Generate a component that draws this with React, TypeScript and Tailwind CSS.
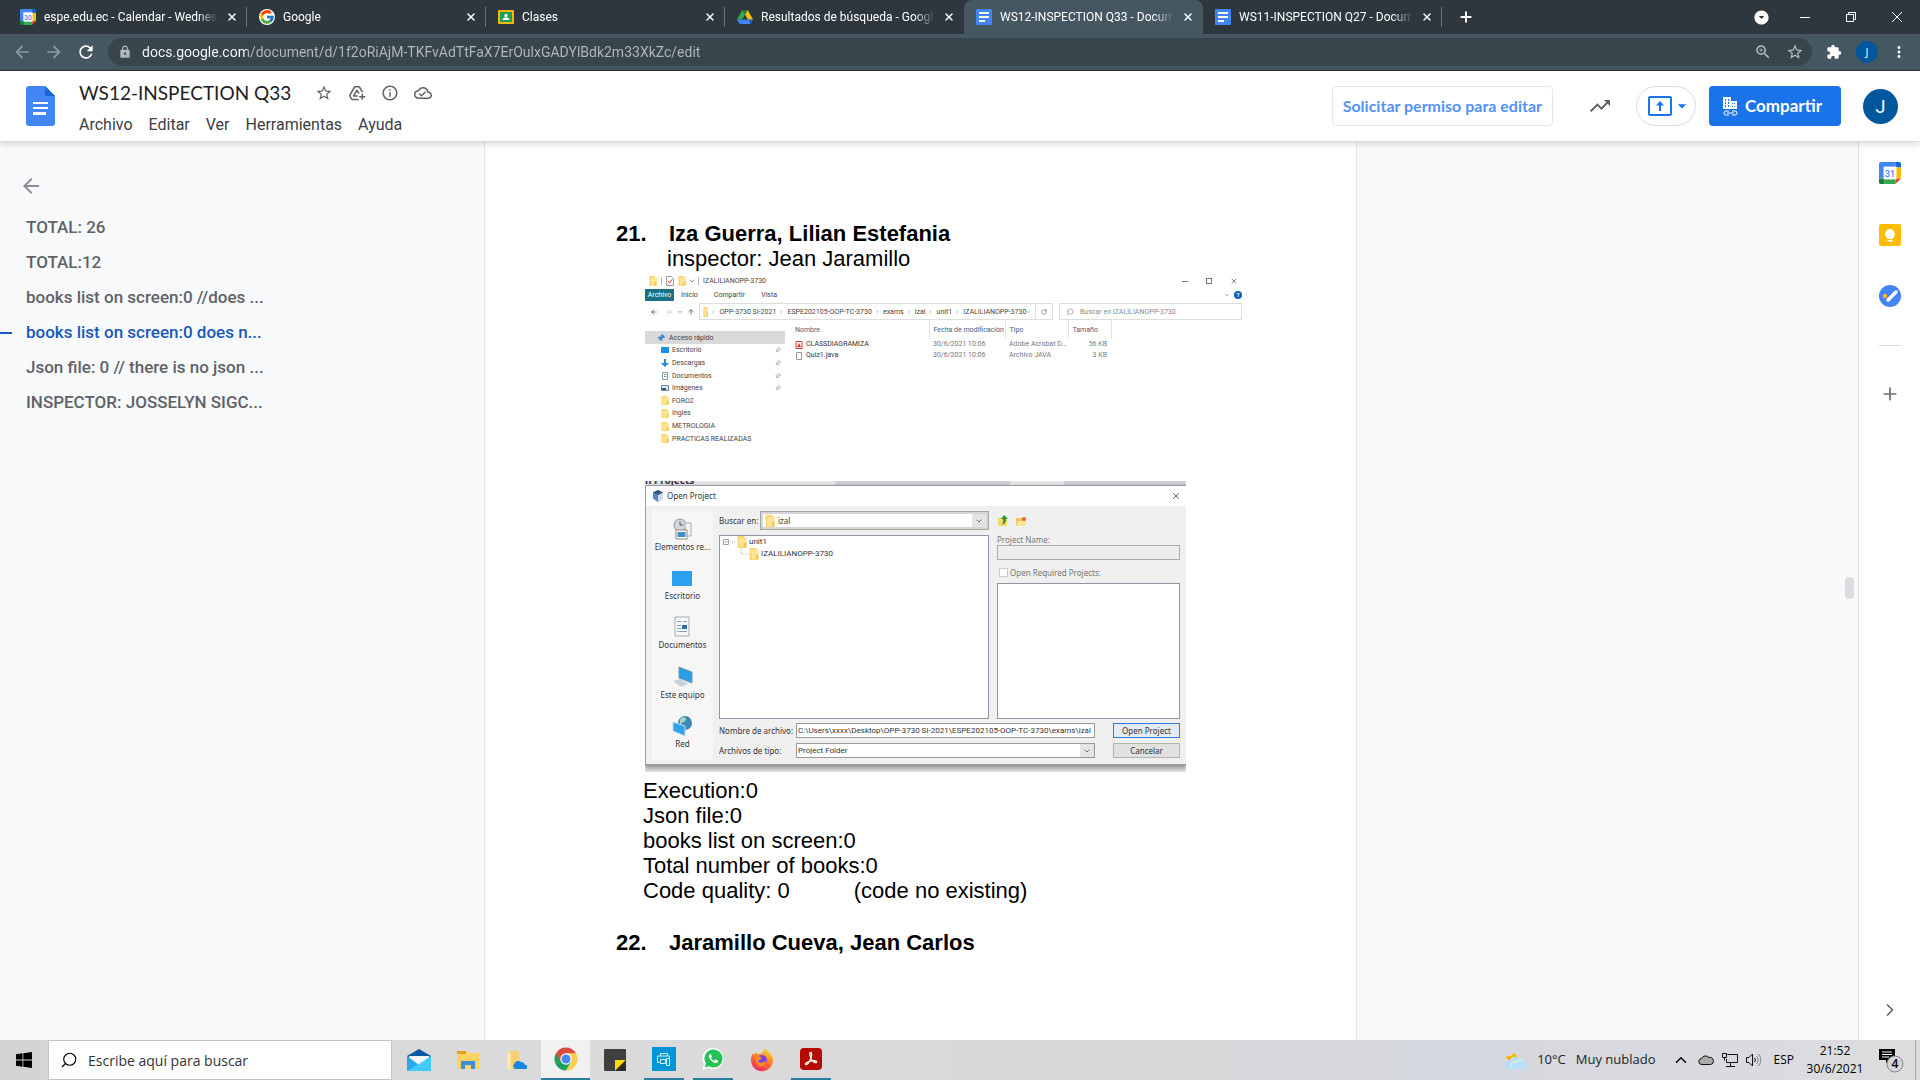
import React from "react";
import { FcGoogle } from "react-icons/fc";
import {
  MdAddToDrive,
  MdArrowBack,
  MdArrowDropDown,
  MdArrowDropDownCircle,
  MdArrowForward,
  MdExtension,
  MdInfoOutline,
  MdLock,
  MdMoreVert,
  MdOutlineCloudDone,
  MdRefresh,
  MdStarBorder,
  MdTrendingUp,
  MdZoomIn,
} from "react-icons/md";
import { ChevronDown, ChevronRight, ChevronUp, Plus, X, Pin, Search, ArrowUp, ArrowLeft, ArrowRight, RotateCw } from "lucide-react";

/* ---------- product icons ---------- */

function CalendarIcon({ day, className }: { day: string; className: string }) {
  return (
    <svg viewBox="0 0 24 24" className={className} aria-hidden="true">
      <path d="M2 0h16v6H6v12H0V2a2 2 0 0 1 2-2z" fill="#4285f4" />
      <path d="M18 0h4a2 2 0 0 1 2 2v4h-6z" fill="#1967d2" />
      <path d="M18 6h6v12h-6z" fill="#fbbc04" />
      <path d="M6 18h12v6H6z" fill="#34a853" />
      <path d="M0 18h6v6H2a2 2 0 0 1-2-2z" fill="#188038" />
      <path d="M18 18h6l-6 6z" fill="#ea4335" />
      <path d="M5 5h14v14H5z" fill="#fff" />
      <text x="12" y="16" textAnchor="middle" fontSize="10" fontFamily="Roboto, sans-serif" fontWeight="500" fill="#4285f4">
        {day}
      </text>
    </svg>
  );
}

function ClassroomIcon() {
  return (
    <svg viewBox="0 0 16 14" className="h-3.5 w-4" aria-hidden="true">
      <rect width="16" height="14" rx="1" fill="#f6b704" />
      <rect x="2" y="2" width="12" height="10" fill="#1e9c58" />
      <circle cx="8" cy="5.4" r="1.6" fill="#fff" />
      <path d="M4.5 10c0-2 2-2.4 3.500-2.400s3.500.4 3.500 2.400z" fill="#fff" />
    </svg>
  );
}

function DriveIcon() {
  return (
    <svg viewBox="0 0 87 78" className="h-3.5 w-4" aria-hidden="true">
      <path d="M6.600 66.850l3.850 6.650c.8 1.400 1.950 2.500 3.300 3.300L27.500 53H0c0 1.550.4 3.100 1.200 4.500z" fill="#4285f4" />
      <path d="M43.650 25L29.900 1.200c-1.350.8-2.500 1.900-3.300 3.300L1.200 48.500A9 9 0 0 0 0 53h27.500z" fill="#34a853" />
      <path d="M73.550 76.800c1.350-.8 2.500-1.900 3.300-3.300l9.250-16c.8-1.400.9-2.950.9-4.500H59.800z" fill="#1967d2" />
      <path d="M43.650 25L57.400 1.200C56.050.4 54.500 0 52.900 0H34.400c-1.600 0-3.150.45-4.500 1.200z" fill="#188038" />
      <path d="M59.800 53H27.500L13.750 76.800c1.350.8 2.900 1.200 4.500 1.200h50.800c1.600 0 3.150-.45 4.500-1.200z" fill="#4285f4" />
      <path d="M73.400 26.500L60.700 4.500c-.8-1.400-1.950-2.500-3.300-3.300L43.650 25 59.800 53h27.450c0-1.550-.4-3.100-1.200-4.500z" fill="#fbbc04" />
    </svg>
  );
}

function DocsFavicon() {
  return (
    <svg viewBox="0 0 16 16" className="size-4" aria-hidden="true">
      <rect width="16" height="16" rx="1" fill="#4285f4" />
      <path d="M3 3h10v2H3zM3 7h10v2H3zM3 11h6v2H3z" fill="#fff" />
    </svg>
  );
}

function DocsLogo() {
  return (
    <svg viewBox="0 0 29 40" className="h-10 w-[29px]" aria-hidden="true">
      <path d="M3 0h16l10 10v27a3 3 0 0 1-3 3H3a3 3 0 0 1-3-3V3a3 3 0 0 1 3-3z" fill="#4285f4" />
      <path d="M19 0l10 10H19z" fill="#1967d2" />
      <path d="M7 16h15v2H7zM7 21h15v2H7zM7 26h13v3H7z" fill="#fff" />
    </svg>
  );
}

function Folder({ className }: { className: string }) {
  return (
    <svg viewBox="0 0 16 16" preserveAspectRatio="none" className={className} aria-hidden="true">
      <path d="M1 0h10l1 2h3v14H1z" fill="#f7d673" />
      <path d="M4 3h11v12H4z" fill="#ffe597" />
      <path d="M11 9h4v6h-4z" fill="#f4c84e" />
    </svg>
  );
}

/* ---------- browser chrome ---------- */

type Tab = { title: string; icon: React.ReactNode; active?: boolean; rule?: boolean };

const tabs: Tab[] = [
  { title: "espe.edu.ec - Calendar - Wednes", icon: <CalendarIcon day="30" className="size-4" />, rule: true },
  { title: "Google", icon: <FcGoogle className="size-4 rounded-full bg-white" />, rule: true },
  { title: "Clases", icon: <ClassroomIcon />, rule: true },
  { title: "Resultados de búsqueda - Googl", icon: <DriveIcon /> },
  { title: "WS12-INSPECTION Q33 - Docum", icon: <DocsFavicon />, active: true },
  { title: "WS11-INSPECTION Q27 - Docum", icon: <DocsFavicon />, rule: true },
];

function TabStrip() {
  return (
    <div className="flex h-[34px] items-center bg-[#2d373d] pl-2 text-white">
      {tabs.map((tab) => (
        <div
          key={tab.title}
          className={
            tab.active
              ? "flex h-full w-[239px] items-center gap-2 rounded-t-lg bg-[#455760] px-3"
              : "flex h-full w-[239px] items-center gap-2 px-3"
          }
        >
          {tab.icon}
          <span className="min-w-0 flex-1 overflow-hidden font-['Roboto'] text-[12px] whitespace-nowrap [mask-image:linear-gradient(90deg,#000_88%,transparent)]">
            {tab.title}
          </span>
          <button aria-label={"Cerrar " + tab.title} className="flex size-3 items-center justify-center">
            <X className="size-3" strokeWidth={3} />
          </button>
          <span className={tab.rule ? "-mr-3 h-5 w-px bg-[#66737a]" : "-mr-3 h-5 w-px"} />
        </div>
      ))}
      <button aria-label="Nueva pestaña" className="ml-3 p-1">
        <Plus className="size-4" strokeWidth={3} />
      </button>
      <div className="ml-auto flex items-center">
        <button aria-label="Buscar pestañas" className="mr-3">
          <MdArrowDropDownCircle className="size-[17px]" />
        </button>
        <button aria-label="Minimizar" className="flex h-7 w-[46px] items-center justify-center">
          <span className="h-px w-2.5 bg-white" />
        </button>
        <button aria-label="Restaurar" className="flex h-7 w-[46px] items-center justify-center">
          <svg viewBox="0 0 10 10" className="size-2.5" fill="none" stroke="#fff" aria-hidden="true">
            <path d="M.5 2.500h7v7h-7zM2.500 2.500v-2h7v7h-2" />
          </svg>
        </button>
        <button aria-label="Cerrar" className="flex h-7 w-[46px] items-center justify-center">
          <svg viewBox="0 0 10 10" className="size-2.5" fill="none" stroke="#fff" aria-hidden="true">
            <path d="M0 0l10 10M10 0L0 10" />
          </svg>
        </button>
      </div>
    </div>
  );
}

function Toolbar() {
  return (
    <div className="flex h-[37px] items-center border-b border-[#2b353b] bg-[#455760] pr-3 pl-3 text-white">
      <button aria-label="Atrás" className="text-[#8f9aa0]">
        <MdArrowBack className="size-5" />
      </button>
      <button aria-label="Adelante" className="ml-3 text-[#8f9aa0]">
        <MdArrowForward className="size-5" />
      </button>
      <button aria-label="Volver a cargar" className="ml-3">
        <MdRefresh className="size-5" />
      </button>
      <div className="ml-3 flex h-7 flex-1 items-center rounded-full bg-[#38454c] px-2">
        <MdLock className="ml-0.5 size-3.5 text-[#b0b8bc]" />
        <input
          aria-label="Dirección"
          readOnly
          value="docs.google.com/document/d/1f2oRiAjM-TKFvAdTtFaX7ErOulxGADYlBdk2m33XkZc/edit"
          className="ml-2.5 min-w-0 flex-1 bg-[linear-gradient(90deg,#fff_105px,#b3babd_105px)] bg-clip-text font-['Roboto'] text-[14px] text-transparent outline-none"
        />
        <button aria-label="Zoom" className="text-[#b8bfc3]">
          <MdZoomIn className="size-[18px]" />
        </button>
        <button aria-label="Marcador" className="ml-3.5 text-[#b8bfc3]">
          <MdStarBorder className="size-[18px]" />
        </button>
      </div>
      <button aria-label="Extensiones" className="ml-[14px]">
        <MdExtension className="size-4" />
      </button>
      <button aria-label="Perfil" className="ml-3.5 size-[22px] rounded-full bg-[#00579c] text-[11px]">
        J
      </button>
      <button aria-label="Menú" className="ml-3">
        <MdMoreVert className="size-[18px]" />
      </button>
    </div>
  );
}

/* ---------- docs header ---------- */

const menus = ["Archivo", "Editar", "Ver", "Herramientas", "Ayuda"];

function DocsHeader() {
  return (
    <header className="relative z-10 flex h-[71px] items-center border-b border-[#dadce0] bg-white pr-[22px] pl-[26px] shadow-[0_2px_6px_rgba(60,64,67,0.2)]">
      <a href="#inicio" aria-label="Página principal de Documentos">
        <DocsLogo />
      </a>
      <div className="ml-6 pt-1">
        <div className="flex items-center">
          <h1 className="mr-6 font-['Lato'] text-[19px] leading-7 text-[#202124]">WS12-INSPECTION Q33</h1>
          <div className="flex items-center gap-[15px] text-[#5f6368]">
            <button aria-label="Destacar"><MdStarBorder className="size-[18px]" /></button>
            <button aria-label="Añadir acceso directo a Drive"><MdAddToDrive className="size-[18px]" /></button>
            <button aria-label="Información"><MdInfoOutline className="size-[18px]" /></button>
            <button aria-label="Estado del documento"><MdOutlineCloudDone className="size-[18px]" /></button>
          </div>
        </div>
        <nav className="mt-1.5 flex gap-4 font-['Roboto'] text-[16px] leading-6 text-[#3c4043]">
          {menus.map((m) => (
            <button key={m}>{m}</button>
          ))}
        </nav>
      </div>
      <div className="ml-auto flex items-center">
        <button className="h-10 rounded border border-[#e4e6e9] px-2.5 font-['Lato'] text-[16px] font-bold text-[#5591f5]">
          Solicitar permiso para editar
        </button>
        <button aria-label="Panel de actividad" className="ml-[35px] text-[#5f6368]">
          <MdTrendingUp className="size-6" />
        </button>
        <button aria-label="Presentar en una reunión" className="ml-6 flex h-10 w-[60px] items-center justify-center rounded-full border border-[#dadce0] pl-1 text-[#1a73e8]">
          <svg viewBox="0 0 24 20" className="h-5 w-6" aria-hidden="true">
            <rect x="1" y="1" width="22" height="18" rx="1" fill="none" stroke="#1a73e8" strokeWidth="2" />
            <path d="M12 5l4 4.500h-3V15h-2V9.500H8z" fill="#1a73e8" />
          </svg>
          <MdArrowDropDown className="-mr-1 size-5" />
        </button>
        <button className="ml-[13px] flex h-10 items-center gap-[7px] rounded bg-[#1a73e8] pr-[19px] pl-[14px] font-['Lato'] text-[17px] font-bold text-white">
          <svg viewBox="0 0 15 19" className="h-[19px] w-[15px]" aria-hidden="true">
            <path d="M0 0h8v4h6v8H0z" fill="#fff" />
            <path d="M2 2h1v2H2zM5 2h1v2H5zM2 5h1v2H2zM5 5h1v2H5zM2 8h1v2H2zM5 8h1v2H5zM9 6h1v1H9zM11 6h1v1h-1zM9 9h1v1H9zM11 9h1v1h-1z" fill="#1a73e8" />
            <path d="M6 14H3a2 2 0 0 0 0 4h3M9 14h3a2 2 0 0 1 0 4H9M4 16h7" fill="none" stroke="#fff" />
          </svg>
          Compartir
        </button>
        <button aria-label="Cuenta" className="ml-[22px] size-[35px] rounded-full bg-[#00579c] font-['Roboto'] text-[18px] text-white">
          J
        </button>
      </div>
    </header>
  );
}

/* ---------- outline ---------- */

const outline = [
  "TOTAL: 26",
  "TOTAL:12",
  "books list on screen:0 //does ...",
  "books list on screen:0 does n...",
  "Json file: 0 // there is no json ...",
  "INSPECTOR: JOSSELYN SIGC...",
];

function Outline() {
  return (
    <nav aria-label="Esquema del documento" className="pt-8 font-['Roboto'] text-[17px] font-medium text-[#5f6368]">
      <button aria-label="Cerrar esquema" className="ml-[19px] block text-[#8b8f94]">
        <MdArrowBack className="size-6" />
      </button>
      <ul className="mt-3">
        {outline.map((item, i) => (
          <li key={item} className="flex h-[35px] items-center">
            <span className={i === 3 ? "h-0.5 w-3 bg-[#185abc]" : "h-0.5 w-3"} />
            <a href={"#s" + i} className={i === 3 ? "ml-[14px] whitespace-nowrap text-[#185abc]" : "ml-[14px] whitespace-nowrap"}>
              {item}
            </a>
          </li>
        ))}
      </ul>
    </nav>
  );
}

/* ---------- file explorer figure ---------- */

const crumbs = ["OPP-3730 SI-2021", "ESPE202105-OOP-TC-3730", "exams", "izal", "unit1", "IZALILIANOPP-3730"];

const places = [
  { name: "Escritorio", kind: "desktop", pinned: true },
  { name: "Descargas", kind: "download", pinned: true },
  { name: "Documentos", kind: "document", pinned: true },
  { name: "Imágenes", kind: "picture", pinned: true },
  { name: "FORO2", kind: "folder", pinned: false },
  { name: "Ingles", kind: "folder", pinned: false },
  { name: "METROLOGIA", kind: "folder", pinned: false },
  { name: "PRACTICAS REALIZADAS", kind: "folder", pinned: false },
];

function PlaceIcon({ kind }: { kind: string }) {
  if (kind === "folder") return <Folder className="h-[9px] w-2" />;
  return (
    <svg viewBox="0 0 8 8" className="size-2" aria-hidden="true">
      {kind === "desktop" && <path d="M0 1h8v6H0z" fill="#1a8fe3" />}
      {kind === "download" && <path d="M3 0h2v4h3L4 8 0 4h3z" fill="#2b88d8" />}
      {kind === "document" && (
        <>
          <path d="M1.500.5h5v7h-5z" fill="#fff" stroke="#8a97a3" />
          <path d="M3 2h2v1H3zM3 4h2v1H3z" fill="#4a90d0" />
        </>
      )}
      {kind === "picture" && (
        <>
          <path d="M.5 1.500h7v5h-7z" fill="#d8ecfa" stroke="#6c8296" />
          <path d="M1 4h4v2H1z" fill="#1c5f9c" />
        </>
      )}
    </svg>
  );
}

function ExplorerFigure() {
  return (
    <div className="h-[196px] w-[597px] bg-white pt-0.5 font-['Roboto'] text-[7px] leading-[12px] whitespace-nowrap text-[#444]">
      <div className="flex h-[14px] items-center pl-1">
        <Folder className="h-2.5 w-2" />
        <span className="mx-1 h-2 w-px bg-[#bbb]" />
        <svg viewBox="0 0 8 10" className="h-2.5 w-2" aria-hidden="true">
          <path d="M.5.5h5l2 2v7h-7z" fill="#fff" stroke="#999" />
          <path d="M2 5l1.500 2L6 3.500" fill="none" stroke="#d13c3c" />
        </svg>
        <Folder className="ml-1 h-2.5 w-2" />
        <ChevronDown className="mx-0.5 size-2" />
        <span className="mr-1 h-2 w-px bg-[#bbb]" />
        IZALILIANOPP-3730
        <span className="ml-auto h-px w-1.5 bg-[#777]" />
        <span className="ml-[18px] size-1.5 border border-[#777]" />
        <X className="mr-1 ml-[18px] size-2" strokeWidth={2} />
      </div>
      <div className="flex h-[13px] items-center">
        <span className="flex h-3 w-[29px] items-center justify-center bg-[#1b7184] text-white">Archivo</span>
        <span className="ml-[7px]">Inicio</span>
        <span className="ml-4">Compartir</span>
        <span className="ml-4">Vista</span>
        <ChevronDown className="ml-auto size-1.5" />
        <span className="ml-1 flex size-2 items-center justify-center rounded-full bg-[#0a64b8] text-[6px] font-bold text-white">?</span>
      </div>
      <div className="mt-0.5 flex h-[17px] items-center">
        <ArrowLeft className="ml-[5px] size-2" />
        <ArrowRight className="ml-[7px] size-2 text-[#bbb]" />
        <ChevronDown className="ml-1 size-1.5" />
        <ArrowUp className="ml-1 size-2" />
        <div className="ml-1 flex h-full w-[337px] items-center border border-[#ddd] pl-[3px]">
          <Folder className="h-2.5 w-[7px]" />
          {crumbs.map((c) => (
            <React.Fragment key={c}>
              <ChevronRight className="mx-1 size-1" strokeWidth={3} />
              <span>{c}</span>
            </React.Fragment>
          ))}
          <ChevronDown className="mr-1 ml-auto size-1.5" />
        </div>
        <div className="flex h-full w-[17px] items-center justify-center border border-l-0 border-[#ddd]">
          <RotateCw className="size-1.5" />
        </div>
        <label className="ml-1.5 flex h-full flex-1 items-center border border-[#ddd] pl-1.5 text-[#888]">
          <Search className="mr-1.5 size-2 -scale-x-100" />
          <input aria-label="Buscar en IZALILIANOPP-3730" placeholder="Buscar en IZALILIANOPP-3730" className="w-32 outline-none placeholder:text-[#888]" />
        </label>
      </div>
      <div className="flex">
        <div className="w-[140px] pt-[11px]">
          <div className="flex h-[13px] items-center bg-[#d9d9d9] pl-3">
            <Pin className="mr-1 size-2 rotate-45 fill-[#2b88d8] text-[#2b88d8]" />
            Acceso rápido
          </div>
          <ul className="flex h-[101px] flex-col">
            {places.map((p) => (
              <li key={p.name} className="flex flex-1 items-center gap-[3px] pr-1 pl-4">
                <PlaceIcon kind={p.kind} />
                <span>{p.name}</span>
                {p.pinned && <Pin className="ml-auto size-1.5 rotate-45 text-[#777]" />}
              </li>
            ))}
          </ul>
        </div>
        <table className="ml-2.5 h-max w-[316px] table-fixed border-collapse text-left">
          <colgroup>
            <col className="w-[134px]" />
            <col className="w-[76px]" />
            <col className="w-[63px]" />
            <col className="w-[43px]" />
          </colgroup>
          <thead>
            <tr className="h-[19px] text-[#47617c]">
              <th className="border-r border-[#e3e3e3] font-normal">Nombre</th>
              <th className="border-r border-[#e3e3e3] pl-1 font-normal">Fecha de modificación</th>
              <th className="border-r border-[#e3e3e3] pl-1 font-normal">Tipo</th>
              <th className="border-r border-[#e3e3e3] pl-1 font-normal">Tamaño</th>
            </tr>
          </thead>
          <tbody className="text-[#777]">
            <tr className="h-[11px] leading-[11px]">
              <td className="text-[#333]">
                <span className="flex items-center gap-[3px]">
                  <svg viewBox="0 0 8 8" className="size-2" aria-hidden="true">
                    <path d="M1 .5h6v7H1z" fill="#fff" stroke="#d33" />
                    <path d="M2 6l2-4 2 4z" fill="#d33" />
                  </svg>
                  CLASSDIAGRAMIZA
                </span>
              </td>
              <td className="pl-1">30/6/2021 10:06</td>
              <td className="pl-1">Adobe Acrobat D...</td>
              <td className="pr-1 text-right">56 KB</td>
            </tr>
            <tr className="h-[11px] leading-[11px]">
              <td className="text-[#333]">
                <span className="flex items-center gap-[3px]">
                  <svg viewBox="0 0 8 8" className="size-2" aria-hidden="true">
                    <path d="M1.500.5h5v7h-5z" fill="#fff" stroke="#999" />
                  </svg>
                  Quiz1.java
                </span>
              </td>
              <td className="pl-1">30/6/2021 10:06</td>
              <td className="pl-1">Archivo JAVA</td>
              <td className="pr-1 text-right">3 KB</td>
            </tr>
          </tbody>
        </table>
      </div>
    </div>
  );
}

/* ---------- open project figure ---------- */

const shortcuts = [
  {
    label: "Elementos re...",
    icon: (
      <>
        <circle cx="8" cy="7" r="6" fill="#d5d8da" stroke="#8b9094" />
        <path d="M8 3.500V7h3" fill="none" stroke="#555" />
        <path d="M13 5h6v13h-6z" fill="#f2f2f2" stroke="#aaa" />
        <path d="M4 12h11v9H4z" fill="#fff" stroke="#888" />
        <path d="M5.500 14h8v5h-8z" fill="#3f8fc9" />
      </>
    ),
  },
  { label: "Escritorio", icon: <path d="M0 4h20v15H0z" fill="#2ba0ee" /> },
  {
    label: "Documentos",
    icon: (
      <>
        <path d="M3 1h14v19H3z" fill="#f5f8fa" stroke="#a4aeb5" />
        <path d="M5 5h4v1H5zM5 9h4v1H5zM5 12h4v1H5zM5 15h10v1H5zM11 5h4v1h-4z" fill="#8ba3b5" />
        <path d="M10 9h5v4h-5z" fill="#356d9e" />
      </>
    ),
  },
  {
    label: "Este equipo",
    icon: (
      <>
        <path d="M7 1l13 5v11L7 12z" fill="#2b9fe6" stroke="#7d98a8" />
        <path d="M1 15l7-2 8 5-7 3z" fill="#c9d2d8" />
      </>
    ),
  },
  {
    label: "Red",
    icon: (
      <>
        <circle cx="13" cy="8" r="7" fill="#3a87b8" />
        <path d="M9 3c3-2 6 0 5 2s-4 2-5 4-2-4 0-6z" fill="#a8d5c0" />
        <path d="M1 7l12 4v10L1 16z" fill="#2fa3ea" stroke="#c7dce8" />
      </>
    ),
  },
];

function OpenProjectFigure() {
  return (
    <div className="flex h-[291px] w-[541px] flex-col overflow-hidden bg-[#e4e4e6] font-['Noto_Sans'] text-[8px] leading-[10px] text-[#333]">
      <div className="flex h-1 items-end overflow-hidden bg-[#e8e8ec] text-[10px] leading-none font-bold">
        <span className="w-[190px]">n Projects</span>
        <span className="h-full w-[175px] bg-[#cfd2d8]" />
        <span className="ml-[54px] h-full flex-1 bg-[#cfd2d8]" />
      </div>
      <div className="flex h-[281px] flex-col border-t border-b-2 border-l border-[#9b9b9b] bg-[#f0f0f0] shadow-[0_2px_5px_rgba(0,0,0,0.4)]">
        <div className="flex h-5 shrink-0 items-center bg-white pr-[5px] pl-1.5">
          <svg viewBox="0 0 12 12" className="size-3" aria-hidden="true">
            <path d="M6 0l5 2.500v6L6 12 1 8.500v-6z" fill="#5d86b5" />
            <path d="M6 5l5-2.500v6L6 12z" fill="#cfdcea" />
            <path d="M1 2.500L6 0l5 2.500L6 5z" fill="#3a567a" />
          </svg>
          <span className="ml-[3px]">Open Project</span>
          <X className="ml-auto size-[10px] text-[#444]" strokeWidth={2} />
        </div>
        <div className="flex flex-1 pt-1 pr-[6px] pl-1.5">
          <ul className="mb-1 flex w-[61px] flex-col bg-[#f6f6f6] pt-1">
            {shortcuts.map((s) => (
              <li key={s.label} className="flex flex-1 flex-col items-center gap-0.5 pt-1 whitespace-nowrap">
                <svg viewBox="0 0 21 22" className="h-[22px] w-[21px]" aria-hidden="true">
                  {s.icon}
                </svg>
                {s.label}
              </li>
            ))}
          </ul>
          <div className="ml-1.5 flex flex-1 flex-col pb-1.5">
            <div className="flex h-[25px] items-start pt-0.5">
              <label htmlFor="look-in" className="mt-1 w-[42px] whitespace-nowrap">
                Buscar en:
              </label>
              <div className="flex h-[17px] w-[227px] items-center border-2 border-[#d5d5d5] bg-white outline outline-[#a5a5a5]">
                <Folder className="ml-0.5 h-3 w-[10px]" />
                <select id="look-in" className="flex-1 appearance-none bg-transparent pl-[3px]">
                  <option>izal</option>
                </select>
                <span className="flex h-full w-3.5 items-center justify-center bg-[#e4e4e4]">
                  <ChevronDown className="size-2" />
                </span>
              </div>
              <button aria-label="Subir un nivel" className="mt-[3px] ml-[9px]">
                <svg viewBox="0 0 12 12" className="size-3" aria-hidden="true">
                  <path d="M1 3h9v8H1z" fill="#f6d76e" />
                  <path d="M7 0l4 4H9c0 3-1 5-4 6 1-2 1.500-4 1-6H4z" fill="#2e9a2e" />
                </svg>
              </button>
              <button aria-label="Nueva carpeta" className="mt-[3px] ml-[6px]">
                <svg viewBox="0 0 12 12" className="size-3" aria-hidden="true">
                  <path d="M1 3h8v8H1z" fill="#f0c65a" />
                  <path d="M3 6h9l-2 5H1z" fill="#fbe294" />
                  <circle cx="9" cy="4" r="2" fill="#e8643c" />
                </svg>
              </button>
            </div>
            <div className="flex h-[184px] gap-2">
              <div className="w-[270px] border border-[#8d96a3] bg-white pl-[3px] font-['Roboto']">
                <div className="flex h-3 items-center">
                  <svg viewBox="0 0 14 12" className="h-3 w-[14px]" aria-hidden="true">
                    <path d="M.5 3.500h5v5h-5zM1.500 6h3" fill="none" stroke="#9aa3ad" />
                    <path d="M7 6h5" stroke="#bbb" strokeDasharray="1 1" />
                  </svg>
                  <Folder className="h-3 w-[10px]" />
                  <span className="ml-0.5">unit1</span>
                </div>
                <div className="flex h-3 items-center pl-4">
                  <svg viewBox="0 0 10 12" className="h-3 w-[10px]" aria-hidden="true">
                    <path d="M2 0v6h7" fill="none" stroke="#bbb" strokeDasharray="1 1" />
                  </svg>
                  <Folder className="h-3 w-[10px]" />
                  <span className="ml-0.5">IZALILIANOPP-3730</span>
                </div>
              </div>
              <div className="flex flex-1 flex-col text-[#777]">
                <label htmlFor="project-name">Project Name:</label>
                <input id="project-name" disabled className="h-[15px] border border-[#aaa] bg-[#ededed]" />
                <label className="flex h-[23px] items-center gap-0.5 pt-0.5">
                  <input type="checkbox" disabled className="ml-0.5 size-[9px] appearance-none border border-[#ccc] bg-white" />
                  Open Required Projects:
                </label>
                <div className="flex-1 border border-[#8d96a3] bg-white" />
              </div>
            </div>
            <div className="mt-1 flex flex-1 items-start">
              <div className="grid grid-cols-[77px_299px] items-center gap-y-[5px]">
                <label htmlFor="file-name">Nombre de archivo:</label>
                <input
                  id="file-name"
                  readOnly
                  value="C:\Users\xxxx\Desktop\OPP-3730 SI-2021\ESPE202105-OOP-TC-3730\exams\izal"
                  className="h-[15px] border border-[#999] bg-white px-px font-['Roboto']"
                />
                <label htmlFor="file-type">Archivos de tipo:</label>
                <div className="flex h-[15px] border border-[#999] bg-white">
                  <select id="file-type" className="flex-1 appearance-none pl-px font-['Roboto']">
                    <option>Project Folder</option>
                  </select>
                  <span className="flex h-full w-3.5 items-center justify-center bg-[#e4e4e4]">
                    <ChevronDown className="size-2" />
                  </span>
                </div>
              </div>
              <div className="ml-auto flex w-[67px] flex-col gap-[5px]">
                <button className="h-[15px] border border-[#2f7fd6] bg-[#e3ebf5]">Open Project</button>
                <button className="h-[15px] border border-[#b3b3b3] bg-[#e1e1e1]">Cancelar</button>
              </div>
            </div>
          </div>
        </div>
      </div>
    </div>
  );
}

/* ---------- document ---------- */

function Heading({ n, children }: { n: string; children: React.ReactNode }) {
  return (
    <h2 className="flex font-bold">
      <span className="w-[53px]">{n}</span>
      {children}
    </h2>
  );
}

function DocumentPage() {
  return (
    <main className="overflow-hidden border-x border-[#e3e5e8] bg-white pt-[79px] pl-[131px] font-['Liberation_Sans'] text-[22px] leading-[25px] text-black">
      <Heading n="21.">Iza Guerra, Lilian Estefania</Heading>
      <p className="pl-[51px]">inspector: Jean Jaramillo</p>
      <div className="pl-[29px] pt-px">
        <ExplorerFigure />
        <div className="mt-[13px]">
          <OpenProjectFigure />
        </div>
      </div>
      <div className="mt-1.5 pl-[27px]">
        <p>Execution:0</p>
        <p>Json file:0</p>
        <p>books list on screen:0</p>
        <p>Total number of books:0</p>
        <p className="flex gap-16">
          <span>Code quality: 0</span>
          <span>(code no existing)</span>
        </p>
      </div>
      <div className="mt-[27px]">
        <Heading n="22.">Jaramillo Cueva, Jean Carlos</Heading>
      </div>
    </main>
  );
}

function SideRail() {
  return (
    <aside className="flex w-[62px] flex-col items-center border-l border-[#dadce0] bg-white pt-5 pb-5">
      <button aria-label="Calendar"><CalendarIcon day="31" className="size-[22px]" /></button>
      <button aria-label="Keep" className="mt-10">
        <svg viewBox="0 0 22 22" className="size-[22px]" aria-hidden="true">
          <rect width="22" height="22" rx="2" fill="#fbbc04" />
          <path d="M11 5a5 5 0 0 0-2.500 9.200V15h5v-.8A5 5 0 0 0 11 5zM8.500 16h5v1.500h-5z" fill="#fff" />
        </svg>
      </button>
      <button aria-label="Tasks" className="mt-[39px]">
        <svg viewBox="0 0 22 22" className="size-[22px]" aria-hidden="true">
          <circle cx="11" cy="11" r="11" fill="#4285f4" />
          <circle cx="6" cy="11" r="2.200" fill="#fbbc04" />
          <path d="M9 15l8-8" stroke="#fff" strokeWidth="3.500" strokeLinecap="round" />
        </svg>
      </button>
      <span className="mt-[38px] h-px w-[22px] bg-[#dadce0]" />
      <button aria-label="Obtener complementos" className="mt-[38px] text-[#6b6f73]">
        <Plus className="size-5" strokeWidth={2} />
      </button>
      <button aria-label="Ocultar panel lateral" className="mt-auto text-[#5f6368]">
        <ChevronRight className="size-5" strokeWidth={2} />
      </button>
    </aside>
  );
}

/* ---------- taskbar ---------- */

const apps = [
  {
    name: "Correo",
    state: "idle",
    icon: (
      <svg viewBox="0 0 24 24" className="size-6" aria-hidden="true">
        <path d="M0 8l12-7 12 7v4H0z" fill="#0c59a4" />
        <path d="M2 8h20v8H2z" fill="#f4f7fa" />
        <path d="M0 8l12 9L24 8v15H0z" fill="#28a8ea" />
        <path d="M0 23L24 8v15z" fill="#50d9ff" opacity=".7" />
      </svg>
    ),
  },
  {
    name: "Explorador de archivos",
    state: "idle",
    icon: (
      <svg viewBox="0 0 22 20" className="h-5 w-[22px]" aria-hidden="true">
        <path d="M0 1h9l2 2h11v16H0z" fill="#ffd262" />
        <path d="M0 1h9v3H0z" fill="#e0a010" />
        <path d="M4 19v-8h14v8h-4v-4H8v4z" fill="#3a8fd8" />
      </svg>
    ),
  },
  {
    name: "OneDrive",
    state: "idle",
    icon: (
      <svg viewBox="0 0 20 20" className="size-5" aria-hidden="true">
        <path d="M0 1h12v18H0z" fill="#f5d070" />
        <path d="M0 1l4 2v17l-4-1z" fill="#fde7a4" />
        <path d="M8 19a3.500 3.500 0 0 1 0-6 4 4 0 0 1 6-1 4 4 0 0 1 4 3 2 2 0 0 1 1 4z" fill="#1587dd" />
      </svg>
    ),
  },
  {
    name: "Chrome",
    state: "active",
    icon: (
      <svg viewBox="0 0 24 24" className="size-6" aria-hidden="true">
        <path d="M12 12L2.040 6.250A11.500 11.500 0 0 0 12 23.500l5-8.600z" fill="#1fa15d" />
        <path d="M12 12l0-5.750h9.960A11.500 11.500 0 0 1 12 23.500l5-8.600z" fill="#fdd04c" />
        <path d="M12 6.250h9.960A11.500 11.500 0 0 0 2.040 6.250L7 14.900z" fill="#dd4b3e" />
        <circle cx="12" cy="12" r="5.700" fill="#fff" />
        <circle cx="12" cy="12" r="4.500" fill="#4587f3" />
      </svg>
    ),
  },
  {
    name: "Notas rápidas",
    state: "idle",
    icon: (
      <svg viewBox="0 0 22 22" className="size-[22px]" aria-hidden="true">
        <rect width="22" height="22" rx="1" fill="#3f3f3f" />
        <path d="M11 11h11L11 22z" fill="#ffda00" />
        <path d="M22 11v11H11z" fill="#2c2c2c" />
      </svg>
    ),
  },
  {
    name: "Impresora",
    state: "open",
    icon: (
      <svg viewBox="0 0 24 24" className="size-6" aria-hidden="true">
        <path d="M0 0h24v24H0z" fill="#0096d6" />
        <path d="M8.500 9V6.500h7V9M7.500 15.500h-2V9h12v2M8.500 12.500h5v4h-5zM14.500 11.500h3v7h-3z" fill="none" stroke="#d6eef9" />
      </svg>
    ),
  },
  {
    name: "WhatsApp",
    state: "open",
    icon: (
      <svg viewBox="0 0 24 24" className="size-6" aria-hidden="true">
        <path d="M12.500 1A10.500 10.500 0 1 1 7.500 21L1.500 22.500 3 17A10.500 10.500 0 0 1 12.500 1z" fill="#fff" />
        <path d="M12.500 2.500A9 9 0 1 1 8 19.300L3.700 20.500 4.900 16.300A9 9 0 0 1 12.500 2.500z" fill="#25c254" />
        <path d="M9.800 7.200c-.5-.4-1.200 0-1.600.6-.8 1.300-.3 3 1.200 4.900 1.600 2 3.500 3.200 5.300 3.300 1.200 0 2.300-1 2.300-2.100 0-.4-2-1.500-2.500-1.300-.4.100-.8 1.200-1.200 1.200-.9-.1-3.100-2-3.100-2.900 0-.4.800-.8.800-1.300 0-.4-.6-2-1.200-2.400z" fill="#fff" />
      </svg>
    ),
  },
  {
    name: "Firefox",
    state: "idle",
    icon: (
      <svg viewBox="0 0 24 24" className="size-6" aria-hidden="true">
        <defs>
          <linearGradient id="ff" x1=".8" y1="0" x2=".3" y2="1">
            <stop offset="0" stopColor="#ffe226" />
            <stop offset=".5" stopColor="#ff7a2a" />
            <stop offset="1" stopColor="#f0256a" />
          </linearGradient>
        </defs>
        <path d="M15 0c1 3 6 4 7.500 9A11 11 0 1 1 1 12c0-3 1-5 2-7l1 2 2-3 1 2h3c2 0 4-3 5-6z" fill="url(#ff)" />
        <circle cx="12" cy="12" r="5" fill="#7a42dc" />
        <path d="M6 9c3-1 5 0 6 1-1 2-3 1-4 3 2 3 6 2 8-1 0 5-3 7-6 6.500S5 14 6 9z" fill="#ff8a24" />
      </svg>
    ),
  },
  {
    name: "Acrobat Reader",
    state: "open",
    icon: (
      <svg viewBox="0 0 22 22" className="size-[22px]" aria-hidden="true">
        <rect width="22" height="22" rx="4" fill="#b30b00" />
        <path
          d="M10.500 4.500c1.600 0 1.400 3 .4 5.600-1 2.700-3.300 6.600-4.800 6.600-1.800 0-.4-2.400 3.700-3.400 3.700-1 6.900-.7 6.900.6 0 1.500-2.800.8-4.700-1.700C10 9.800 9.200 4.500 10.500 4.500z"
          fill="none"
          stroke="#fff"
          strokeWidth="1.300"
        />
      </svg>
    ),
  },
];

function Taskbar() {
  return (
    <footer className="flex h-10 shrink-0 items-stretch bg-[linear-gradient(90deg,#d4d4d6,#dcdbdc_30%,#d9d7d6_55%,#d4d7de_75%,#dddddf)] text-[#222]">
      <button aria-label="Inicio" className="flex w-12 items-center justify-center">
        <svg viewBox="0 0 16 16" className="size-4" aria-hidden="true">
          <path d="M0 2.200l6.500-.9v6.300H0zM7.300 1.200L16 0v7.600H7.300zM0 8.400h6.500v6.300L0 13.800zM7.300 8.400H16V16l-8.700-1.200z" />
        </svg>
      </button>
      <label className="flex w-[344px] items-center border border-[#c4c4c4] bg-white pl-[11px]">
        <Search className="size-[18px] -scale-x-100 text-black" strokeWidth={1.5} />
        <input
          aria-label="Buscar"
          placeholder="Escribe aquí para buscar"
          className="ml-2.5 w-64 text-[14px] outline-none placeholder:text-[#333]"
        />
      </label>
      <div className="ml-0.5 flex">
        {apps.map((a) => (
          <button
            key={a.name}
            aria-label={a.name}
            className={
              a.state === "active"
                ? "flex w-[49px] flex-col items-center bg-[#f1f1f2]"
                : "flex w-[49px] flex-col items-center"
            }
          >
            <span className="flex flex-1 items-center">{a.icon}</span>
            <span
              className={
                a.state === "active" ? "h-0.5 w-full bg-[#2a7f9e]" : a.state === "open" ? "h-0.5 w-10 bg-[#2a7f9e]" : "h-0 w-10"
              }
            />
          </button>
        ))}
      </div>
      <div className="ml-auto flex items-center text-[13px]">
        <svg viewBox="0 0 22 20" className="h-5 w-[22px]" aria-hidden="true">
          <path d="M9 1c0 3 1 4 4 5-1 3-5 6-9 4-2-1-3-2-3-4 4 1 8-1 8-5z" fill="#f7b80c" />
          <path d="M5 19a4 4 0 0 1-.5-8A6 6 0 0 1 15 9a5 5 0 0 1 5 4 3.200 3.200 0 0 1-1 6z" fill="#b9dff8" />
          <path d="M6 17a4 4 0 0 1 5-5 5 5 0 0 1 7-1" fill="none" stroke="#e8f6ff" />
        </svg>
        <span className="ml-2.5">10°C</span>
        <span className="ml-2.5">Muy nublado</span>
        <button aria-label="Mostrar iconos ocultos" className="ml-4 text-black">
          <ChevronUp className="size-[18px]" strokeWidth={2} />
        </button>
        <svg viewBox="0 0 16 12" className="ml-2 h-3 w-4" fill="#aaa" stroke="#111" aria-hidden="true">
          <path d="M4 10.500a3 3 0 0 1-.5-6A4.500 4.500 0 0 1 11 3.500a3.500 3.500 0 0 1 1.500 7z" />
        </svg>
        <svg viewBox="0 0 16 14" className="ml-2 h-3.5 w-4" fill="none" stroke="#111" aria-hidden="true">
          <path d="M5.500 1.500h10v8h-11V6M4 13.500h9M8.500 9.500v4M.5.5h4v4h-4zM2.500 4.500v3" />
        </svg>
        <svg viewBox="0 0 16 14" className="ml-2 h-3.5 w-4" fill="none" stroke="#111" aria-hidden="true">
          <path d="M.5 4.500h2.500l3.500-3.500v12L3 9.500H.5zM8.500 5a3 3 0 0 1 0 4" />
          <path d="M10.500 3a6 6 0 0 1 0 8M12.500 1a9 9 0 0 1 0 12" stroke="#888" />
        </svg>
        <span className="ml-3 text-[12px] text-black">ESP</span>
        <div className="ml-3.5 flex w-[54px] flex-col items-center text-[12px] leading-[18px] text-black">
          <span>21:52</span>
          <span>30/6/2021</span>
        </div>
        <button aria-label="Notificaciones" className="mr-2.5 ml-[17px]">
          <svg viewBox="0 0 26 26" className="size-[26px]" aria-hidden="true">
            <path d="M0 2h16v11h-6l-3 3v-3H0z" fill="#000" />
            <path d="M3 5h10M3 7.500h10M3 10h7" stroke="#fff" />
            <circle cx="16" cy="17" r="8" fill="#d5d5d5" stroke="#888" />
            <text x="16" y="21" textAnchor="middle" fontSize="12" fontWeight="600" fontFamily="Open Sans, sans-serif">
              4
            </text>
          </svg>
        </button>
        <span className="mr-1 h-10 w-px bg-[#a8a8aa]" />
      </div>
    </footer>
  );
}

export default function App() {
  return (
    <div className="flex h-screen flex-col overflow-hidden bg-[#f8f9fb] font-['Open_Sans',sans-serif]">
      <TabStrip />
      <Toolbar />
      <DocsHeader />
      <div className="flex min-h-0 flex-1">
        <div className="grid min-w-0 flex-1 grid-cols-[1fr_873px_1fr_17px]">
          <Outline />
          <DocumentPage />
          <div />
          <div className="flex flex-col pt-[435px] pl-1">
            <span className="h-[22px] w-[9px] rounded-sm bg-[#dadce0]" />
          </div>
        </div>
        <SideRail />
      </div>
      <Taskbar />
    </div>
  );
}
